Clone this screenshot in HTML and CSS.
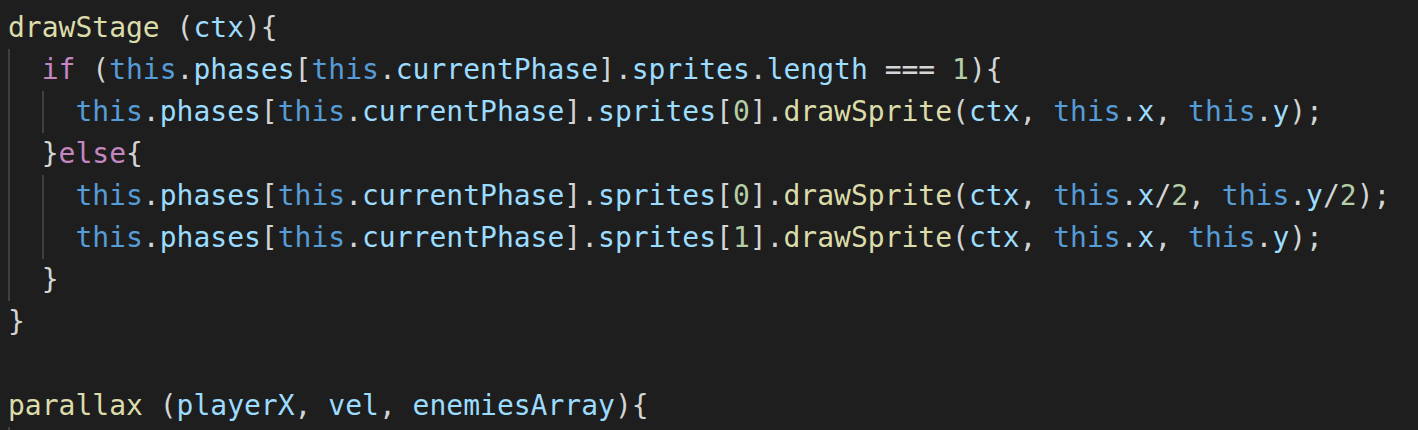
FILE: index.html
```html
<!DOCTYPE html>
<html>
<head>
<meta charset="utf-8">
<link rel="stylesheet" href="styles.css">
</head>
<body>
<div class="editor">
<div class="line"><span class="fn">drawStage</span> <span class="p">(</span><span class="v">ctx</span><span class="p">){</span></div>
<div class="line"><span class="g"></span><span class="k">if</span> <span class="p">(</span><span class="t">this</span><span class="p">.</span><span class="v">phases</span><span class="p">[</span><span class="t">this</span><span class="p">.</span><span class="v">currentPhase</span><span class="p">].</span><span class="v">sprites</span><span class="p">.</span><span class="v">length</span> <span class="p">===</span> <span class="n">1</span><span class="p">){</span></div>
<div class="line"><span class="g"></span><span class="g"></span><span class="t">this</span><span class="p">.</span><span class="v">phases</span><span class="p">[</span><span class="t">this</span><span class="p">.</span><span class="v">currentPhase</span><span class="p">].</span><span class="v">sprites</span><span class="p">[</span><span class="n">0</span><span class="p">].</span><span class="fn">drawSprite</span><span class="p">(</span><span class="v">ctx</span><span class="p">,</span> <span class="t">this</span><span class="p">.</span><span class="v">x</span><span class="p">,</span> <span class="t">this</span><span class="p">.</span><span class="v">y</span><span class="p">);</span></div>
<div class="line"><span class="g"></span><span class="p">}</span><span class="k">else</span><span class="p">{</span></div>
<div class="line"><span class="g"></span><span class="g"></span><span class="t">this</span><span class="p">.</span><span class="v">phases</span><span class="p">[</span><span class="t">this</span><span class="p">.</span><span class="v">currentPhase</span><span class="p">].</span><span class="v">sprites</span><span class="p">[</span><span class="n">0</span><span class="p">].</span><span class="fn">drawSprite</span><span class="p">(</span><span class="v">ctx</span><span class="p">,</span> <span class="t">this</span><span class="p">.</span><span class="v">x</span><span class="p">/</span><span class="n">2</span><span class="p">,</span> <span class="t">this</span><span class="p">.</span><span class="v">y</span><span class="p">/</span><span class="n">2</span><span class="p">);</span></div>
<div class="line"><span class="g"></span><span class="g"></span><span class="t">this</span><span class="p">.</span><span class="v">phases</span><span class="p">[</span><span class="t">this</span><span class="p">.</span><span class="v">currentPhase</span><span class="p">].</span><span class="v">sprites</span><span class="p">[</span><span class="n">1</span><span class="p">].</span><span class="fn">drawSprite</span><span class="p">(</span><span class="v">ctx</span><span class="p">,</span> <span class="t">this</span><span class="p">.</span><span class="v">x</span><span class="p">,</span> <span class="t">this</span><span class="p">.</span><span class="v">y</span><span class="p">);</span></div>
<div class="line"><span class="g"></span><span class="p">}</span></div>
<div class="line"><span class="p">}</span></div>
<div class="line"> </div>
<div class="line"><span class="fn">parallax</span> <span class="p">(</span><span class="v">playerX</span><span class="p">,</span> <span class="v">vel</span><span class="p">,</span> <span class="v">enemiesArray</span><span class="p">){</span></div>
<div class="line"><span class="g"></span></div>
</div>
</body>
</html>
```
FILE: styles.css
```css
html, body {
  margin: 0;
  padding: 0;
  background: #1e1e1e;
  overflow: hidden;
}
.editor {
  padding: 7px 0 0 8px;
  font-family: "DejaVu Sans Mono", "Liberation Mono", monospace;
  font-size: 28px;
  color: #d4d4d4;
}
.line {
  height: 42px;
  line-height: 42px;
  white-space: pre;
}
.g {
  display: inline-block;
  width: 2ch;
  height: 42px;
  vertical-align: top;
  border-left: 2px solid #404040;
  box-sizing: border-box;
}
.fn { color: #dcdcaa; }
.v { color: #9cdcfe; }
.t { color: #569cd6; }
.k { color: #c586c0; }
.n { color: #b5cea8; }
.p { color: #d4d4d4; }
```
